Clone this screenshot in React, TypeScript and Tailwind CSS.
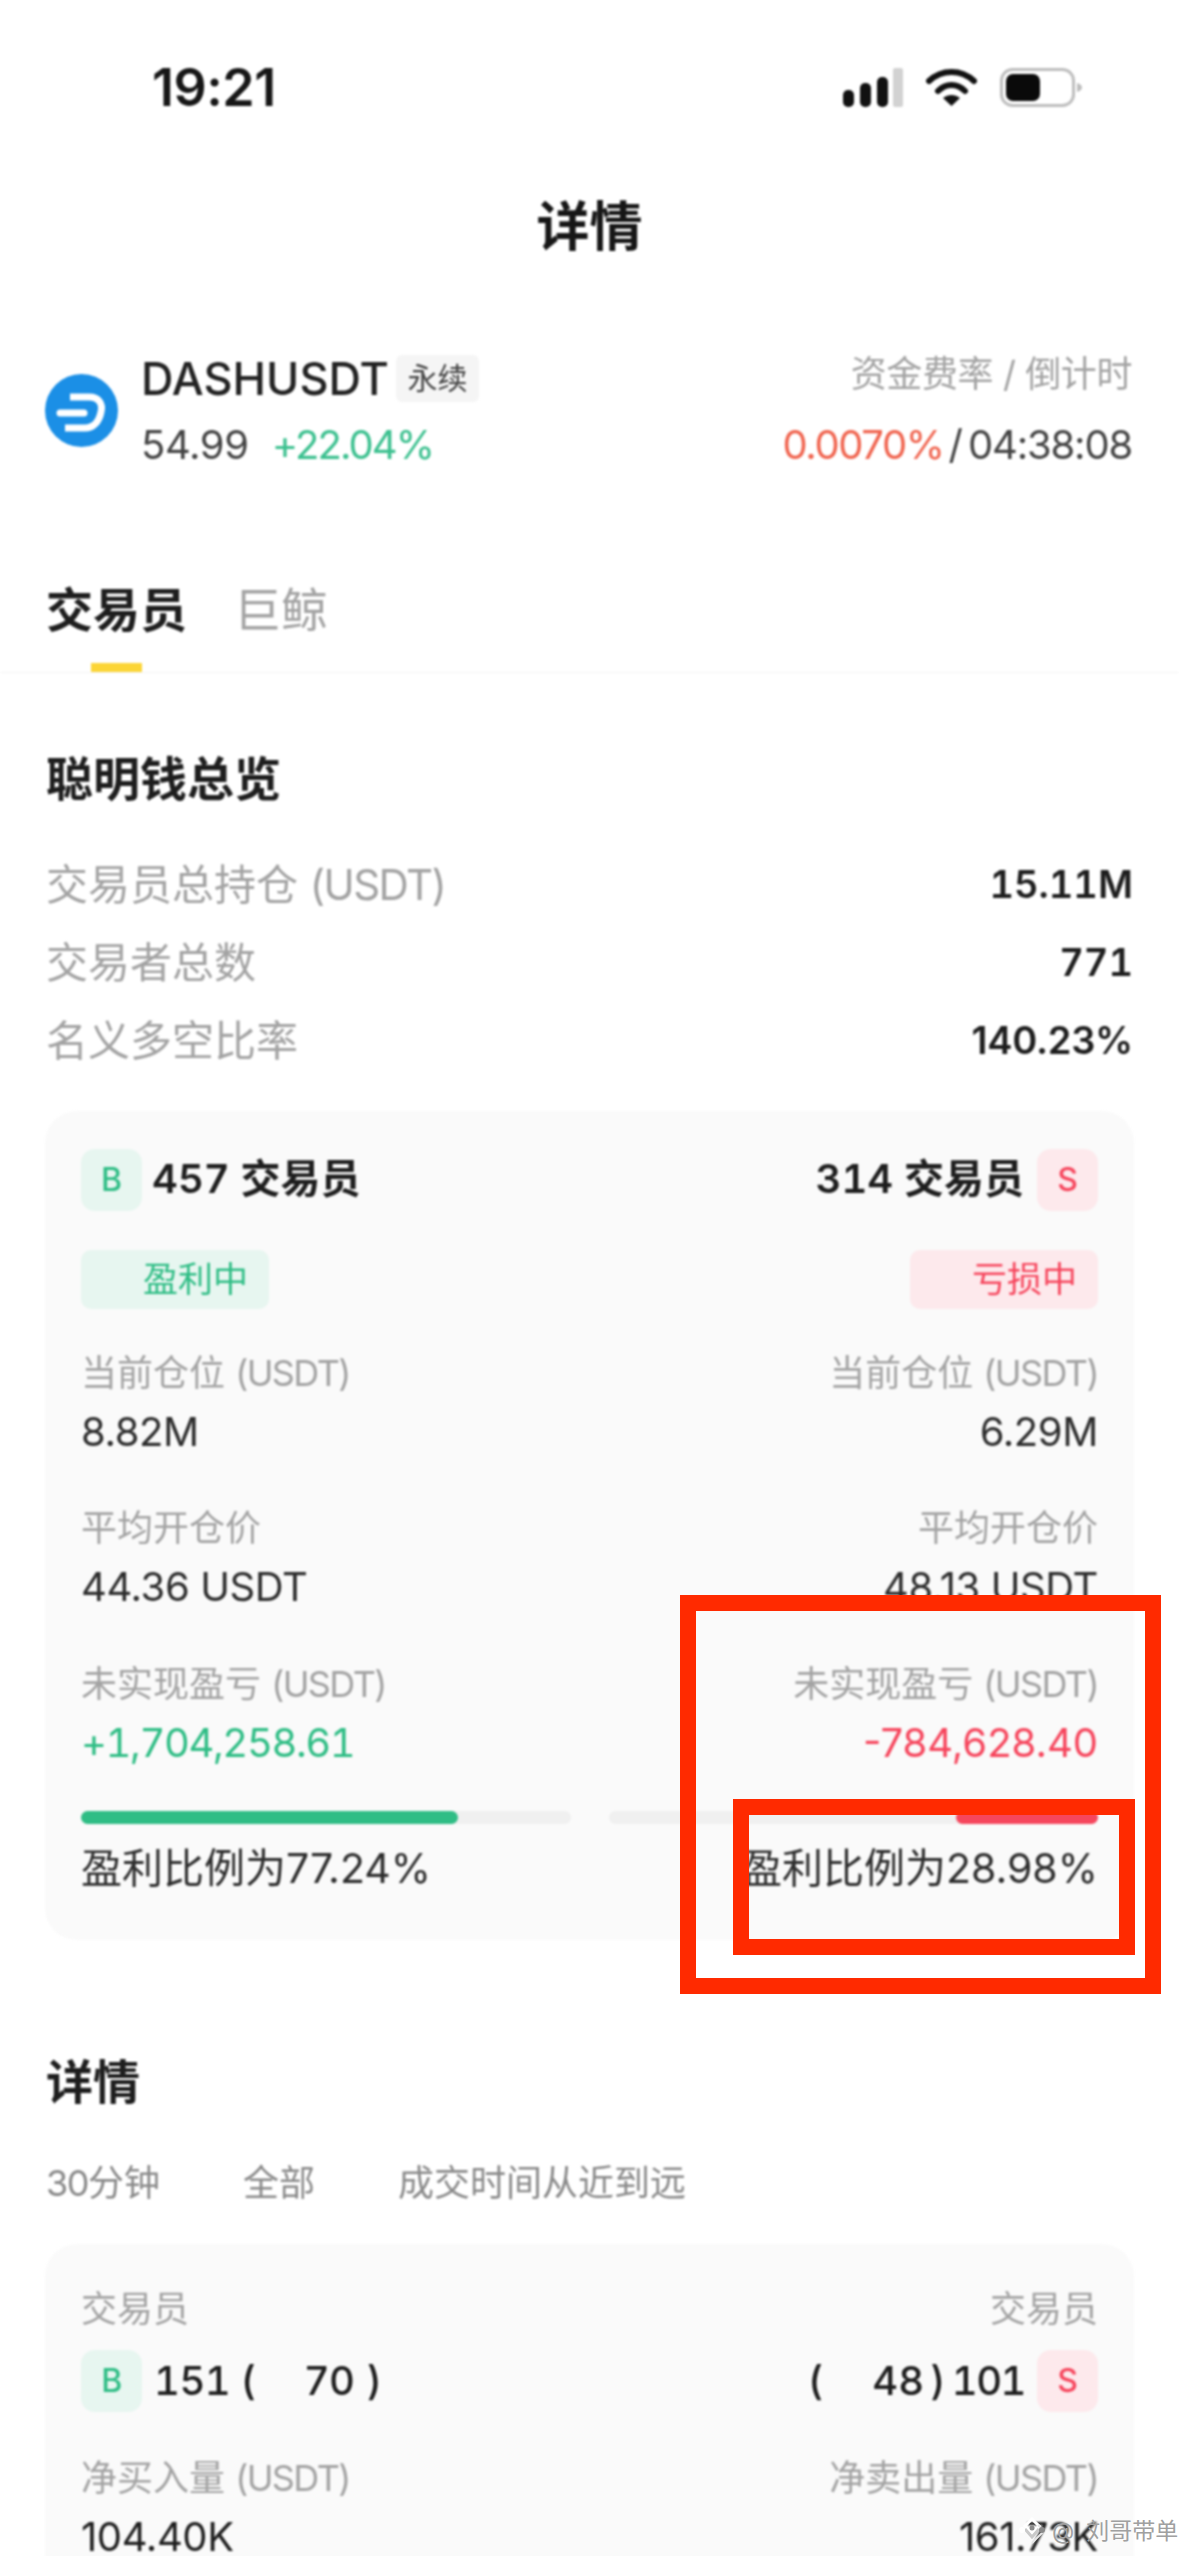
import type { ReactNode } from "react";

const FONT = "[font-family:Inter,'Noto_Sans_CJK_SC',sans-serif]";

function StatusIcons() {
  return (
    <div className="flex items-center">
      <svg width="60" height="39" viewBox="0 0 60 39">
        <rect x="0" y="22" width="11" height="17" rx="5" fill="#111" />
        <rect x="17" y="15" width="11" height="24" rx="5" fill="#111" />
        <rect x="34" y="9" width="11" height="30" rx="5" fill="#111" />
        <rect x="50" y="0" width="10" height="39" rx="2" fill="#d2d2d2" />
      </svg>
      <svg className="ml-[23px]" width="51" height="39" viewBox="0 0 51 39" fill="none">
        <path d="M3 13 C16 1 35 1 48 13" stroke="#111" strokeWidth="6" strokeLinecap="round" />
        <path d="M12 23 C20 15 31 15 39 23" stroke="#111" strokeWidth="6" strokeLinecap="round" />
        <path d="M25.5 38 L17 30 C22 26 29 26 34 30 Z" fill="#111" />
      </svg>
      <svg className="ml-[23px]" width="82" height="39" viewBox="0 0 82 39" fill="none">
        <rect x="1.5" y="1.5" width="72" height="36" rx="11" stroke="#bdbdbd" strokeWidth="3" />
        <rect x="6" y="6" width="34" height="27" rx="7" fill="#0a0a0a" />
        <path d="M77 15 C80 16 82 17 82 19.5 C82 22 80 23 77 24 Z" fill="#bdbdbd" />
      </svg>
    </div>
  );
}

function DashLogo() {
  return (
    <svg width="73" height="73" viewBox="0 0 73 73" fill="none">
      <circle cx="36.5" cy="36.5" r="36.5" fill="#1b8fe6" />
      <path d="M25 23 H44 C54 23 58 30 56 38 C54 48 48 54 40 54 H20" stroke="#fff" strokeWidth="7" />
      <path d="M15 39 H39" stroke="#fff" strokeWidth="7" strokeLinecap="round" />
    </svg>
  );
}

function WatermarkIcon() {
  return (
    <svg width="30" height="28" viewBox="0 0 30 28" fill="none">
      <path d="M15 2 L22 9 L15 16 L8 9 Z" stroke="#fff" strokeWidth="3" />
      <path d="M8 12 L15 20 L22 12" stroke="#c9c9c9" strokeWidth="3" />
      <path d="M15 26 L27 14 L21 8" stroke="#e6e6e6" strokeWidth="2" />
      <circle cx="5" cy="13" r="3" fill="#fff" />
      <circle cx="15" cy="11" r="2.5" fill="#8a8a8a" />
      <circle cx="25" cy="13" r="3" fill="#8a8a8a" />
    </svg>
  );
}

function Usdt() {
  return <span className="tracking-[-1.6px]">(USDT)</span>;
}

function SummaryRow({ label, value, className }: { label: ReactNode; value: string; className?: string }) {
  return (
    <div className="flex h-[78px] items-center justify-between">
      <span className="text-[42px] text-[#a3a3a3]">{label}</span>
      <span className={`text-[38px] font-semibold text-[#1e1e1e] ${className ?? ""}`}>{value}</span>
    </div>
  );
}

function Badge({ side }: { side: "buy" | "sell" }) {
  const buy = side === "buy";
  return (
    <span
      className={
        buy
          ? "flex h-[62px] w-[61px] shrink-0 items-center justify-center rounded-[14px] bg-[#e7f6f0] text-[32px] font-medium text-[#2fbd85]"
          : "flex h-[62px] w-[61px] shrink-0 items-center justify-center rounded-[14px] bg-[#fde9ec] text-[32px] font-medium text-[#f6465d]"
      }
    >
      {buy ? "B" : "S"}
    </span>
  );
}

function Stat({
  label,
  value,
  right,
  className,
  valueClass = "tracking-[-0.4px] text-[#2d2d2d]",
}: {
  label: ReactNode;
  value: string;
  right?: boolean;
  className: string;
  valueClass?: string;
}) {
  return (
    <div className={`${className} flex flex-col ${right ? "items-end" : "items-start"}`}>
      <span className="text-[36px] leading-[50px] text-[#a3a3a3]">{label}</span>
      <span className={`mt-[9px] text-[40px] leading-[50px] ${valueClass}`}>{value}</span>
    </div>
  );
}

function OverviewSide({
  right,
  head,
  status,
  position,
  price,
  pnl,
  ratio,
  bar,
}: {
  right?: boolean;
  head: string;
  status: string;
  position: string;
  price: string;
  pnl: string;
  ratio: string;
  bar: number;
}) {
  return (
    <div className={`flex flex-col ${right ? "items-end" : "items-start"}`}>
      <div className={right ? "flex h-[62px] flex-row-reverse items-center gap-[13px]" : "flex h-[62px] items-center gap-[10px]"}>
        <Badge side={right ? "sell" : "buy"} />
        <span className="-mt-[2px] text-[40px] font-semibold tabular-nums text-[#1e1e1e]">{head}</span>
      </div>
      <div
        className={
          right
            ? "mt-[39px] flex h-[59px] w-[188px] items-center justify-end rounded-[10px] bg-[#fde9ec] pr-[21px] text-[35px] text-[#f6465d]"
            : "mt-[39px] flex h-[59px] w-[188px] items-center justify-end rounded-[10px] bg-[#e7f6f0] pr-[21px] text-[35px] text-[#2fbd85]"
        }
      >
        {status}
      </div>
      <Stat
        className="mt-[39px]"
        right={right}
        label={
          <>
            当前仓位 <Usdt />
          </>
        }
        value={position}
      />
      <Stat className="mt-[46px]" right={right} label="平均开仓价" value={price} />
      <Stat
        className="mt-[47px]"
        right={right}
        label={
          <>
            未实现盈亏 <Usdt />
          </>
        }
        value={pnl}
        valueClass={right ? "text-[#f6465d]" : "tabular-nums tracking-[-1.4px] text-[#2fbd85]"}
      />
      <div className={`mt-[43px] flex h-[13px] w-full rounded-full bg-[#f0f0f0] ${right ? "justify-end" : ""}`}>
        <div
          className={right ? "h-full rounded-full bg-[#f6465d]" : "h-full rounded-full bg-[#2fbd85]"}
          style={{ width: `${bar}%` }}
        />
      </div>
      <span className="mt-[19px] text-[41px] leading-[50px] text-[#2d2d2d]">{ratio}</span>
    </div>
  );
}

export default function App() {
  return (
    <div className={`relative h-[2556px] w-[1179px] overflow-hidden bg-white ${FONT}`}>
      <div className="blur-[1px]">
        {/* Status bar */}
        <div className="flex items-center justify-between pl-[152px] pr-[97px] pt-[68px]">
          <span className="text-[52px] font-semibold leading-[39px] tracking-[-0.5px] text-[#161616]">19:21</span>
          <StatusIcons />
        </div>

        <h1 className="mt-[90px] text-center text-[53px] font-bold leading-[60px] text-[#161616]">详情</h1>

        {/* Ticker */}
        <div className="mt-[98px] flex items-center justify-between pl-[45px] pr-[47px]">
          <div className="flex items-center gap-[23px]">
            <DashLogo />
            <div className="flex flex-col">
              <div className="flex h-[47px] items-center gap-[7px]">
                <span className="text-[45px] font-medium leading-[47px] text-[#222]">DASHUSDT</span>
                <span className="flex h-[47px] w-[83px] items-center justify-center rounded-[6px] bg-[#f5f5f5] text-[30px] text-[#444]">
                  永续
                </span>
              </div>
              <div className="mt-[23px] flex h-[40px] items-center gap-[23px] text-[40px] leading-[40px]">
                <span className="tracking-[-0.4px] text-[#444]">54.99</span>
                <span className="tracking-[-1.9px] text-[#3cc08f]">+22.04%</span>
              </div>
            </div>
          </div>
          <div className="flex flex-col items-end">
            <span className="-mt-[4px] h-[51px] text-[36px] leading-[47px] tracking-[-0.4px] text-[#a3a3a3]">
              资金费率 / 倒计时
            </span>
            <div className="mt-[23px] flex h-[40px] items-center text-[40px] leading-[40px] text-[#444]">
              <span className="tracking-[-1.4px] text-[#f0644f]">0.0070%</span>
              <span className="mx-[5px]">/</span>
              <span className="tracking-[-1.2px]">04:38:08</span>
            </div>
          </div>
        </div>

        {/* Tabs */}
        <div className="mt-[115px] border-b border-[#f4f4f4] px-[46px]">
          <div className="flex gap-[47px] text-[47px] leading-[60px]">
            <div className="flex flex-col items-center">
              <span className="font-bold text-[#1e1e1e]">交易员</span>
              <span className="mt-[23px] h-[9px] w-[51px] bg-[#fcd535]" />
            </div>
            <span className="text-[#a3a3a3]">巨鲸</span>
          </div>
        </div>

        {/* Overview */}
        <section className="px-[45px]">
          <h2 className="mt-[76px] px-[1px] text-[47px] font-bold leading-[60px] text-[#1e1e1e]">聪明钱总览</h2>
          <div className="mt-[36px] pl-[1px] pr-[1px]">
            <SummaryRow
              label={
                <>
                  交易员总持仓 <Usdt />
                </>
              }
              value="15.11M"
              className="tabular-nums"
            />
            <SummaryRow label="交易者总数" value="771" className="tabular-nums" />
            <SummaryRow label="名义多空比率" value="140.23%" className="tracking-[-0.3px]" />
          </div>
          <div className="mt-[32px] grid grid-cols-2 gap-[38px] rounded-[32px] bg-[#fafafa] px-[36px] pb-[47px] pt-[38px]">
            <OverviewSide
              head="457 交易员"
              status="盈利中"
              position="8.82M"
              price="44.36 USDT"
              pnl="+1,704,258.61"
              ratio="盈利比例为77.24%"
              bar={77}
            />
            <OverviewSide
              right
              head="314 交易员"
              status="亏损中"
              position="6.29M"
              price="48.13 USDT"
              pnl="-784,628.40"
              ratio="盈利比例为28.98%"
              bar={29}
            />
          </div>
        </section>

        {/* Details */}
        <section className="px-[45px]">
          <h2 className="mt-[112px] px-[1px] text-[47px] font-bold leading-[60px] text-[#1e1e1e]">详情</h2>
          <div className="mt-[46px] flex gap-[83px] px-[1px] text-[36px] leading-[50px] text-[#8a8a8a]">
            <span>
              <span className="tracking-[-1.5px]">30</span>分钟
            </span>
            <span>全部</span>
            <span>成交时间从近到远</span>
          </div>
          <div className="mt-[36px] grid grid-cols-2 gap-[38px] rounded-[32px] bg-[#fafafa] px-[36px] pb-[47px] pt-[40px]">
            <div className="flex flex-col items-start">
              <span className="text-[36px] leading-[50px] text-[#a3a3a3]">交易员</span>
              <div className="mt-[16px] flex h-[62px] items-center text-[40px] font-medium tabular-nums tracking-[-0.5px] text-[#1e1e1e]">
                <Badge side="buy" />
                <span className="ml-[12px]">151 (</span>
                <span className="ml-[48px]">70</span>
                <span className="ml-[12px]">)</span>
              </div>
              <Stat
                className="mt-[41px]"
                label={
                  <>
                    净买入量 <Usdt />
                  </>
                }
                value="104.40K"
                valueClass="tracking-[-0.4px] text-[#1e1e1e]"
              />
            </div>
            <div className="flex flex-col items-end">
              <span className="text-[36px] leading-[50px] text-[#a3a3a3]">交易员</span>
              <div className="mt-[16px] flex h-[62px] items-center text-[40px] font-medium tabular-nums text-[#1e1e1e]">
                <span>(</span>
                <span className="ml-[49px]">48</span>
                <span className="ml-[6px]">)</span>
                <span className="ml-[6px] mr-[12px] tracking-[-1.5px]">101</span>
                <Badge side="sell" />
              </div>
              <Stat
                right
                className="mt-[41px]"
                label={
                  <>
                    净卖出量 <Usdt />
                  </>
                }
                value="161.73K"
                valueClass="tracking-[-0.4px] text-[#1e1e1e]"
              />
            </div>
          </div>
        </section>
      </div>

      {/* Red annotation boxes */}
      <div className="absolute left-[680px] top-[1595px] h-[399px] w-[481px] border-[16px] border-[#ff2a00]" />
      <div className="absolute left-[733px] top-[1799px] h-[156px] w-[402px] border-[16px] border-[#ff2a00]" />

      {/* Watermark */}
      <div className="absolute left-[1017px] top-[2516px] flex items-center text-[23px] leading-[30px] text-[#a0a0a0]">
        <WatermarkIcon />
        <span className="ml-[5px]">@</span>
        <span className="ml-[12px]">刘哥带单</span>
      </div>
    </div>
  );
}
